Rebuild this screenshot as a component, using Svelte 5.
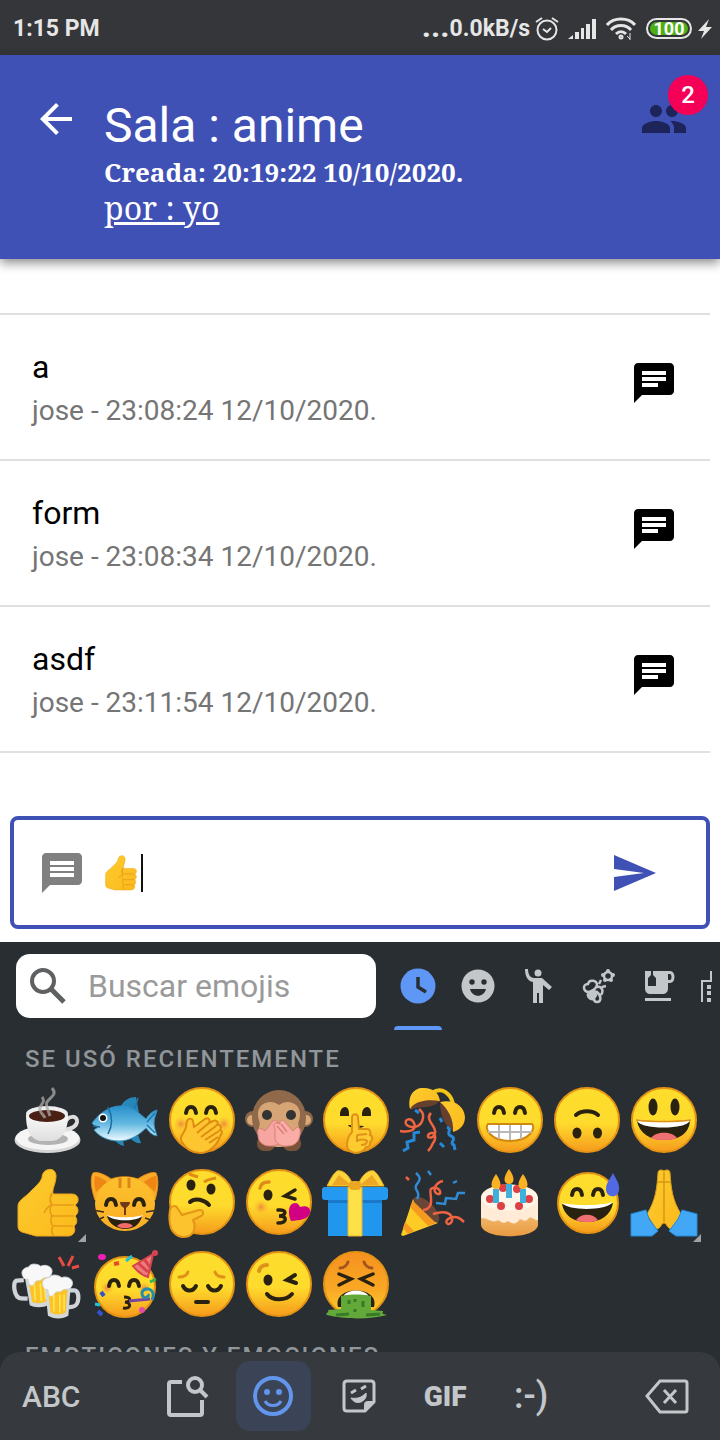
<script>
  const messages = [
    { text: 'a', meta: 'jose - 23:08:24 12/10/2020.' },
    { text: 'form', meta: 'jose - 23:08:34 12/10/2020.' },
    { text: 'asdf', meta: 'jose - 23:11:54 12/10/2020.' }
  ];
  const emojis = [
    'coffee', 'fish', 'giggle', 'monkey', 'shush', 'ball', 'grin', 'upside', 'smile',
    'thumb', 'cat', 'think', 'kiss', 'gift', 'popper', 'cake', 'sweat', 'pray',
    'beers', 'party', 'pensive', 'wink', 'vomit'
  ];
  const withVariants = ['thumb', 'pray'];
  const categories = ['Recientes', 'Emoticones', 'Personas', 'Naturaleza', 'Comida', 'Viajes'];
  let draft = $state('');
  let query = $state('');
</script>

{#snippet face(fill = 'url(#face)')}
  <circle cx="38" cy="38" r="32" {fill} stroke="#e59315" stroke-width="2" />
{/snippet}

{#snippet arcEyes(x1, x2, y)}
  <g fill="none" stroke="#2a2210" stroke-width="4" stroke-linecap="round">
    <path d="M{x1 - 5} {y + 3}c1-8 9-8 10 0" />
    <path d="M{x2 - 5} {y + 3}c1-8 9-8 10 0" />
  </g>
{/snippet}

{#snippet chatIcon(d)}
  <svg class="icon48" viewBox="0 0 24 24" fill="currentColor" aria-hidden="true"><path {d} /></svg>
{/snippet}

{#snippet thumbShape()}
  <path d="M37 6c5-2 9 1 9 6 0 8-4 12-3 18h19c7 0 8 8 3 11 4 3 4 8 0 11 3 4 2 8-1 10 2 5 0 9-5 10H26c-5-1-9-3-14-4-3-1-4-3-4-6V42c0-6 8-9 13-15 4-4 9-8 11-13 0-4 2-7 5-8z" fill="url(#hand)" stroke="#f0a51c" stroke-width="1" />
  <path d="M42 29c-3 4-2 8 0 12-5 1-6 5-8 8M42 41h22M42 52h22M43 62h20M42 31c-3 3-2 8 0 10-3 3-2 8 0 11-2 3-1 8 1 10-2 4-1 8 1 10" fill="none" stroke="#e79a18" stroke-width="1.6" />
{/snippet}

{#snippet mug(transform, handle)}
  <g {transform}>
    <path d={handle} fill="none" stroke="#d0d4d8" stroke-width="5" />
    <path d="M23 23h31l-3 38c-6 4-18 4-24 0z" fill="#d3d7da" />
    <path d="M27 27h23l-2 30c-5 3-14 3-18 0z" fill="#fbc326" />
    <path d="M34 36v20M41 36v21M46 36v19" stroke="#ffe352" stroke-width="2" />
    <path d="M22 28c-5-9 3-12 7-12 2-5 11-3 14 0 7-3 16 3 12 10-3 6-8 2-11 5-4 4-7-1-10 5-4 5-7 0-7-6-2 0-4 0-5-2z" fill="#f8f8f8" stroke="#cfd2d6" stroke-width="1" />
  </g>
{/snippet}

{#snippet emoji(name)}
  <svg class="emoji" viewBox="0 0 76 76" aria-hidden="true">
    {#if name === 'coffee'}
      <ellipse cx="37.500" cy="58" rx="33" ry="13" fill="#d5d5d5" />
      <ellipse cx="37.500" cy="56" rx="32" ry="12" fill="#f5f5f5" />
      <ellipse cx="38" cy="57" rx="20" ry="6" fill="#b3b3b3" />
      <path d="M55 41c3-8 13-8 12-1-1 6-8 7-13 8" fill="none" stroke="#dedede" stroke-width="4" />
      <path d="M16 33c0 15 4 24 14 26h13c10-2 15-11 15-26z" fill="url(#cup)" />
      <ellipse cx="37" cy="32" rx="21" ry="8" fill="#eee" />
      <ellipse cx="37" cy="34" rx="18" ry="6" fill="#4a2014" />
      <path d="M42 6c6 7-2 9-5 14-2 3 1 7 3 14M32 15c5 6-4 8-2 13 1 4 4 5 5 8" fill="none" stroke="#aaa9a7" stroke-opacity=".75" stroke-width="3" />
    {:else if name === 'fish'}
      <path d="M34 24c3-6 9-9 15-9l3 16zM27 57c2 3 5 6 10 7l-1-7zM44 57c3 3 7 5 10 4l-3-8z" fill="#2787b8" />
      <path d="M5 41c9-12 20-18 32-17 9 1 16 8 22 13 3-5 7-8 11-9-1 5-3 8-3 13s2 9 3 13c-5-1-8-4-11-8-7 7-16 13-27 13C19 59 11 53 7 48l4-3c-3-1-5-2-6-4z" fill="url(#fish)" stroke="#3490c2" stroke-width="1" />
      <path d="M6 44l7 1M21 25c4 8 5 18 0 27" fill="none" stroke="#1d6d9a" stroke-width="1.500" />
      <circle cx="16" cy="36" r="4.500" fill="#fff" /><circle cx="16" cy="36" r="3" fill="#151515" />
      <path d="M51 16l-3 10M68 31l-8 9M68 51l-8-8" stroke="#1d79ad" stroke-width="1.500" />
    {:else if name === 'giggle'}
      {@render face()}
      <circle cx="17" cy="42" r="8" fill="url(#blush)" /><circle cx="60" cy="42" r="8" fill="url(#blush)" />
      {@render arcEyes(27, 47, 28)}
      <path d="M18 60c-4-5 3-9 4-15 0-6 2-9 5-8 3 0 2 5 3 8l11-8c3-2 6 1 4 4l4-2c4-2 6 2 4 4 4-1 5 3 3 5 3 1 2 4 0 6-2 8-10 17-20 17-7 0-14-4-18-11z" fill="#fdc52f" stroke="#df8b14" stroke-width="2" />
      <path d="M33 51l12-10M37 55l15-11M41 58l14-9M45 61l9-6" stroke="#df8b14" stroke-width="2" />
    {:else if name === 'monkey'}
      <circle cx="12" cy="37" r="8" fill="#8d6748" /><circle cx="64" cy="37" r="8" fill="#8d6748" />
      <circle cx="11" cy="38" r="5" fill="#d8a979" /><circle cx="65" cy="38" r="5" fill="#d8a979" />
      <rect x="16" y="54" width="18" height="15" rx="7" fill="#7a5439" /><rect x="42" y="54" width="18" height="15" rx="7" fill="#7a5439" />
      <ellipse cx="38" cy="36" rx="27" ry="28" fill="#8f694a" />
      <path d="M38 23c-9-7-22-1-21 10 0 5 3 7 1 12-1 12 9 20 20 20s21-8 20-20c-2-5 1-7 1-12 1-11-12-17-21-10z" fill="#d5a576" />
      <circle cx="26" cy="33" r="5" fill="#333" /><circle cx="50" cy="33" r="5" fill="#333" />
      <path d="M36 42h3" stroke="#704b31" stroke-width="2" />
      <path d="M42 56c-1 6-7 8-13 8-8 0-12-5-12-11-1-6 1-8 4-6l3 2 8-10c2-2 5 0 4 3l3-2c3-1 4 2 3 5z" fill="#f7a5a0" stroke="#da8078" />
      <path d="M34 57c1 5 7 8 13 7 7 0 11-5 12-11 1-6-1-9-4-7l-3 3-9-10c-2-2-5 0-4 3l-3-1c-3 0-4 3-2 5z" fill="#faaca6" stroke="#da8078" />
      <path d="M36 44l7 8M40 42l6 8" stroke="#da8078" stroke-width="1.500" />
    {:else if name === 'shush'}
      {@render face()}
      <path d="M22 34v-3c1-8 9-8 9 0v3zM44 34v-3c1-8 9-8 9 0v3z" fill="#2a2210" />
      <path d="M30 43l16 1c-2 3-14 3-16-1z" fill="#2a2210" />
      <path d="M34 50V36c0-5 6-5 6 0l1 11h8c3 0 4 3 3 6 3 1 3 5 0 7 1 3-1 5-4 5-2 4-6 6-11 6-5-1-8-4-8-8 0-5 1-9 5-13z" fill="#fdca30" stroke="#df9218" stroke-width="2" />
      <path d="M39 53l10-1M39 59c3-2 8-2 10 0 0 4-4 4-6 4M39 53v7" fill="none" stroke="#df9218" stroke-width="2" />
    {:else if name === 'ball'}
      <path d="M37 11c10-7 19 1 21 11" fill="none" stroke="#f2c517" stroke-width="4" />
      <path d="M15 27C12 13 20 5 29 6c9 0 15 5 16 13z" fill="url(#hand)" />
      <path d="M15 27c5-8 17-10 30-8-8 8-17 5-30 8zM45 20c9 6 14 15 13 29-8-5-13-15-13-29z" fill="#65402f" />
      <path d="M45 20c13-3 24 3 25 15 0 8-5 13-12 15 1-13-5-23-13-30z" fill="url(#hand)" />
      <path d="M5 49c11 2 17-2 14-8s-10-4-8 1c2 4 15 6 17-6 1-6-2-7-4-9M36 31c-7 7 6 13 4 20s-10 5-6 1c6-4 8 4 4 9-2 5-5 8-5 8" fill="none" stroke="#ef6541" stroke-width="2.500" />
      <path d="M8 69l5-3-1-6 7-2v-7l6-1M52 45c6 3-2 6 4 9 7 3-3 7 3 9l1 5M45 36l2 4M20 28l4 3M45 61l4 4" fill="none" stroke="#2588d8" stroke-width="3" />
    {:else if name === 'grin'}
      {@render face()}{@render arcEyes(27, 48, 28)}
      <path d="M16 42h44c4 4-2 17-22 17S12 46 16 42z" fill="#fff" stroke="#cf8910" stroke-width="2" />
      <path d="M16 50h44M27 43v14M38 43v15M49 43v14" stroke="#b9b9b9" stroke-width="2" />
    {:else if name === 'upside'}
      {@render face()}
      <path d="M27 33c6-5 16-5 22 0" fill="none" stroke="#2a2210" stroke-width="4" stroke-linecap="round" />
      <ellipse cx="28" cy="51" rx="4.500" ry="5.500" fill="#2a2210" /><ellipse cx="48.500" cy="51" rx="4.500" ry="5.500" fill="#2a2210" />
    {:else if name === 'smile'}
      {@render face()}
      <ellipse cx="27" cy="25" rx="4.500" ry="8.500" fill="#2a2210" /><ellipse cx="49" cy="25" rx="4.500" ry="8.500" fill="#2a2210" />
      <path d="M11 39c14 4 38 4 53 0-1 13-12 19-26 19S13 51 11 39z" fill="#2a2210" />
      <path d="M11 38c14 3 38 3 53 0-1 10-52 10-53 0z" fill="#fff" />
      <path d="M25 56c5-7 21-7 26 0-6 3-20 3-26 0z" fill="#f06f72" />
      <path d="M10 38c15 2 39 2 55 0" stroke="#df9218" stroke-width="1.500" fill="none" />
    {:else if name === 'thumb'}
      {@render thumbShape()}
    {:else if name === 'cat'}
      <path d="M8 36C4 24 3 14 6 9c4-2 13 2 18 6 9-3 18-3 27 0 5-4 15-8 18-6 3 6 2 17-1 27z" fill="#f9ac27" stroke="#e88d18" />
      <path d="M9 28c-2-8-2-13-1-16 4 0 8 3 12 6zM68 28c2-8 2-13 1-16-4 0-8 3-12 6z" fill="#ee8615" />
      <ellipse cx="38" cy="40" rx="30" ry="27" fill="url(#cat)" />
      <path d="M33 14v10M42 14v10" stroke="#df8419" stroke-width="3" />
      {@render arcEyes(24, 52, 38)}
      <path d="M33 38h10c0 3-3 5-4 6v7h-2v-7c-2-1-4-3-4-6z" fill="#70391a" />
      <path d="M20 52c8 3 28 3 35 0-2 9-9 13-17 13S22 60 20 52z" fill="#2a2210" /><path d="M20 51c7 3 28 3 36 0-4 7-31 7-36 0z" fill="#fff" />
      <path d="M30 62c3-4 13-4 16 0-4 3-12 3-16 0z" fill="#f16c69" />
      <path d="M5 46l12 2M6 58l11-5M59 48l12-2M58 54l12 4" stroke="#372e22" stroke-width="1.500" />
    {:else if name === 'think'}
      {@render face()}
      <path d="M25 10l9 3M40 18c4-3 8-3 12-4" stroke="#df8b14" stroke-width="3" fill="none" />
      <ellipse cx="27" cy="21" rx="4.500" ry="5.500" fill="#2a2210" /><ellipse cx="47" cy="25" rx="4.500" ry="5.500" fill="#2a2210" />
      <path d="M26 38c5-5 15-2 19 3" fill="none" stroke="#2a2210" stroke-width="4" stroke-linecap="round" />
      <path d="M6 46c1-5 6-5 8-1l4 6 17-5c5-1 5 5 2 6l-8 4c3 5 2 13-4 16-8 3-15-1-18-8-2-6-2-12-1-18z" fill="#fdc32e" stroke="#e49618" stroke-width="2" />
    {:else if name === 'kiss'}
      {@render face()}
      <circle cx="20" cy="43" r="8" fill="url(#blush)" />
      <path d="M19 24c1-5 4-6 9-6" fill="none" stroke="#dd8c18" stroke-width="3.500" stroke-linecap="round" />
      <ellipse cx="27" cy="31" rx="4.500" ry="5.500" fill="#2a2210" />
      <path d="M54 26l-10 6 10 3M37 46c10-1 8 6 1 6 9 0 8 7-1 7" fill="none" stroke="#2a2210" stroke-width="3.500" stroke-linecap="round" />
      <path d="M50 57c-4-9-2-18 4-18 3 0 4 2 5 4 6-2 11 0 10 6-2 7-11 7-19 8z" fill="#d20082" />
    {:else if name === 'gift'}
      <path d="M9 22c3-6 6-12 10-15 6-2 14 6 16 15zM66 22c-3-6-6-12-10-15-6-2-14 6-16 15z" fill="#fdd43b" stroke="#e6ac24" />
      <path d="M14 21l7-10 12 10M61 21l-7-10-12 10" fill="#eda725" />
      <path d="M10 35h54v37H10z" fill="#2196ed" /><rect x="4" y="23" width="66" height="13" rx="3" fill="#2499f1" /><path d="M10 36h54v3H10z" fill="#1b78c8" />
      <path d="M30 23h14v49H30z" fill="#fee049" stroke="#e7b12d" /><rect x="31" y="17" width="12" height="9" rx="4" fill="#eba622" />
    {:else if name === 'popper'}
      <ellipse cx="31" cy="46" rx="8" ry="17" transform="rotate(-45 31 46)" fill="#694638" />
      <path d="M6 71l12-36c3 12 12 21 25 24L8 72z" fill="#fccb25" /><path d="M15 43l18 19 8-3-23-22zM10 58l9 9-6 3-5-6z" fill="#f49a1f" />
      <path d="M28 46c14-1 5-19 8-21 6-5 13 5 7 5-6-1-4-11 5-13M38 50c12-4 20-1 19 7-3 7-10 0-2-3 7-3 11 1 14 4M11 13l3 3" fill="none" stroke="#ef6340" stroke-width="2.500" />
      <path d="M22 35c5-8-5-9 0-15s2-8-1-11M41 39l9 1 1-6 10 1 2-6h7M33 7l3 4M58 19l4-2" fill="none" stroke="#318bd5" stroke-width="2.500" />
    {:else if name === 'cake'}
      <path d="M9 33v28c2 15 55 15 57 0V33z" fill="url(#cakeBase)" />
      <path d="M9 34c0-18 57-18 57 0v22c-4 1-5-4-9-2-4 5-6 2-9 1-4 6-8 5-12 2-5 4-8 0-10-1-6 4-9-2-17-2z" fill="#ffebd6" />
      <ellipse cx="37.500" cy="34" rx="28" ry="13" fill="#fff5e8" />
      <g fill="#dc4145"><circle cx="18" cy="35" r="4" /><circle cx="29" cy="42" r="4" /><circle cx="47" cy="42" r="4" /><circle cx="57" cy="35" r="4" /><circle cx="31" cy="24" r="4" /><circle cx="45" cy="25" r="4" /></g>
      <path d="M21 25h6v14h-6zM34 20h6v14h-6zM48 25h6v14h-6z" fill="#3db1db" />
      <path d="M24 10c-6 8-6 15 0 15s6-7 0-15zM37 5c-6 8-6 15 0 15s6-7 0-15zM51 10c-6 8-6 15 0 15s6-7 0-15z" fill="#fab224" />
    {:else if name === 'sweat'}
      <circle cx="39" cy="39" r="30" fill="url(#face)" stroke="#e59315" stroke-width="2" />
      {@render arcEyes(28, 49, 28)}
      <path d="M13 40c14 3 37 3 51-1-2 12-12 19-26 19S15 51 13 40z" fill="#2a2210" /><path d="M13 39c14 3 37 3 51-1-6 9-45 9-51 1z" fill="#fff" />
      <path d="M27 56c5-7 17-7 22 0-6 3-16 3-22 0z" fill="#f06f72" />
      <path d="M64 9c3 6 7 11 6 17-1 9-13 8-13-1 0-6 4-10 7-16z" fill="#5169e3" />
    {:else if name === 'pray'}
      <path d="M38 7c-3-2-6-1-6 2-1 14-2 27-11 41l9 15c5 0 5-6 8-6s3 6 8 6l9-15C46 36 45 23 44 9c0-3-3-4-6-2z" fill="url(#hand)" stroke="#dfa016" /><path d="M38 8v50M32 18h12" stroke="#d9970f" stroke-width="1.500" />
      <path d="M5 50l15-4 3 9 9 12-6 5H5zM71 50l-15-4-4 9-9 12 7 5h21z" fill="#42a7f4" stroke="#258bdc" />
    {:else if name === 'beers'}
      {@render mug('translate(-4 7) rotate(-4 30 40) scale(.85)', 'M22 31h-8c-6 0-5 20 3 21l8 1')}
      {@render mug('translate(15 18) scale(.85)', 'M52 31h6c7 0 6 18-1 19l-6 1')}
      <path d="M54 20l-5-9M58 20l5-10M62 22l7-2" stroke="#e84b43" stroke-width="3" />
    {:else if name === 'party'}
      <circle cx="38" cy="41" r="30" fill="url(#face)" stroke="#e59315" stroke-width="2" />
      <circle cx="20" cy="42" r="7" fill="url(#blush)" /><circle cx="57" cy="42" r="7" fill="url(#blush)" />
      {@render arcEyes(27, 47, 37)}
      <path d="M37 51c8 0 7 5 1 5 7 1 6 7-2 6" fill="none" stroke="#2a2210" stroke-width="3" />
      <path d="M42 55l21-2" stroke="#79449f" stroke-width="3" /><path d="M65 54c6-13-11-14-10-6 1 6 8 3 6 0" fill="none" stroke="#248cac" stroke-width="3" />
      <path d="M46 20L66 8l-5 23c-7-2-11-6-15-11z" fill="#ef7b7c" stroke="#d6434d" stroke-width="2" /><path d="M51 17l10 9M57 13l6 8" stroke="#d6434d" stroke-width="3" /><circle cx="68" cy="7" r="3" fill="#d6434d" />
      <ellipse cx="15" cy="11" rx="4" ry="3" fill="#ef20b5" /><circle cx="55" cy="64" r="3" fill="#e34bab" />
      <path d="M39 15l6-5M8 58l5 1" stroke="#20c4d9" stroke-width="3" /><path d="M27 18l5-1" stroke="#e8492d" stroke-width="4" /><path d="M14 46l3 4M11 65l4 4" stroke="#3552cc" stroke-width="4" /><path d="M63 36l6-3" stroke="#37b44a" stroke-width="3" />
    {:else if name === 'pensive'}
      {@render face()}
      <path d="M15 31c5 0 8-2 9-5M60 31c-5 0-8-2-9-5" fill="none" stroke="#df9218" stroke-width="3" stroke-linecap="round" />
      <path d="M19 40c3 6 10 6 13 0M44 40c3 6 10 6 13 0M32 56h12" fill="none" stroke="#2a2210" stroke-width="4" stroke-linecap="round" />
    {:else if name === 'wink'}
      {@render face()}
      <path d="M18 25c1-4 4-6 8-6" fill="none" stroke="#df9218" stroke-width="4" stroke-linecap="round" /><ellipse cx="27" cy="34" rx="4.500" ry="5.500" fill="#2a2210" />
      <path d="M54 29l-8 5 9 3M26 48c5 7 19 7 25 0" fill="none" stroke="#2a2210" stroke-width="4" stroke-linecap="round" />
    {:else if name === 'vomit'}
      {@render face('url(#sick)')}
      <path d="M22 22c4 0 7-3 8-6M54 22c-4 0-7-3-8-6" fill="none" stroke="#a4541c" stroke-width="3" stroke-linecap="round" />
      <path d="M21 28l12 5-12 6M55 28l-12 5 12 6" fill="none" stroke="#2a2210" stroke-width="3.500" stroke-linecap="round" />
      <path d="M20 61c-6-22 42-22 36 0z" fill="#2a2210" /><path d="M26 49c5-6 19-6 24 0v4H26z" fill="#fff" />
      <path d="M23 50c8-2 22-2 30 0v14l12 1c1 2-4 2 4 4-18 5-44 4-60 0-3-1 3-3 1-5l13-1z" fill="#63a93a" /><path d="M31 54v4M37 53v3M45 55v6M37 63v3M18 69l13-1M48 69l14-1" stroke="#377b27" stroke-width="3" />
    {/if}
  </svg>
{/snippet}

<svg class="defs" aria-hidden="true">
  <defs>
    <linearGradient id="face" x1="0" y1="0" x2="0" y2="1"><stop offset="0" stop-color="#fddd2d" /><stop offset=".55" stop-color="#fedb2c" /><stop offset="1" stop-color="#f69b1d" /></linearGradient>
    <linearGradient id="sick" x1="0" y1="0" x2="0" y2="1"><stop offset="0" stop-color="#f59120" /><stop offset=".6" stop-color="#f9a925" /><stop offset="1" stop-color="#fcd12d" /></linearGradient>
    <linearGradient id="cat" x1="0" y1="0" x2="0" y2="1"><stop offset="0" stop-color="#fcc12d" /><stop offset="1" stop-color="#faae25" /></linearGradient>
    <linearGradient id="hand" x1="0" y1="0" x2="1" y2="1"><stop offset="0" stop-color="#fdcc30" /><stop offset="1" stop-color="#fbb91b" /></linearGradient>
    <linearGradient id="fish" x1="0" y1="0" x2="0" y2="1"><stop offset="0" stop-color="#278fcb" /><stop offset=".5" stop-color="#62b8e1" /><stop offset="1" stop-color="#f1fcff" /></linearGradient>
    <linearGradient id="cup" x1="0" y1="0" x2="0" y2="1"><stop offset="0" stop-color="#fafafa" /><stop offset="1" stop-color="#dedede" /></linearGradient>
    <linearGradient id="cakeBase" x1="0" y1="0" x2="0" y2="1"><stop offset="0" stop-color="#fbd18c" /><stop offset="1" stop-color="#e89a42" /></linearGradient>
    <radialGradient id="blush"><stop offset="0" stop-color="#f18a3d" /><stop offset="1" stop-color="#fac32c" stop-opacity="0" /></radialGradient>
  </defs>
</svg>

<div class="page">
  <div class="status">
    <span class="time">1:15 PM</span>
    <span class="dots">...</span><span>0.0kB/s</span>
    <svg class="alarm" viewBox="0 0 24 26" fill="none" stroke="#e6e6e6" stroke-width="2" aria-hidden="true"><circle cx="12" cy="14" r="9.500" /><path d="M8 13l4 3 4-4M1 6l6-4M23 6l-6-4" /></svg>
    <svg class="signal" viewBox="0 0 28 20" fill="#e6e6e6" aria-hidden="true"><path d="M0 20l5-4v4zM7 13h4v7H7zM13 9h3v11h-3zM18 5h4v15h-4zM24 0h4v20h-4z" /></svg>
    <svg class="wifi" viewBox="0 0 30 23" fill="none" stroke="#e6e6e6" stroke-width="3" aria-hidden="true"><path d="M1 8c7-8 21-8 28 0M5 13c5-6 15-6 20 0M10 17c3-3 7-3 10 0" /><circle cx="15" cy="20" r="1" /><path d="M24 16v7M24 22l-3-3" stroke-width="1" /></svg>
    <span class="battery"><span>100</span></span>
    <svg class="bolt" viewBox="0 0 14 20" fill="#e6e6e6" aria-hidden="true"><path d="M11 0L0 12h6L3 20 14 8H8z" /></svg>
  </div>

  <header>
    <button class="back" aria-label="Volver"><svg class="icon48" viewBox="0 0 24 24" fill="#fff"><path d="M20 11H7.830l5.590-5.590L12 4l-8 8 8 8 1.410-1.410L7.830 13H20v-2z" /></svg></button>
    <div class="room">
      <h1>Sala : anime</h1>
      <strong>Creada: 20:19:22 10/10/2020.</strong>
      <span class="owner">por : yo</span>
    </div>
    <button class="people" aria-label="Participantes">
      <svg class="icon48" viewBox="0 0 24 24" fill="#1c2459"><path d="M16 11c1.660 0 2.990-1.340 2.990-3S17.660 5 16 5c-1.660 0-3 1.340-3 3s1.340 3 3 3zm-8 0c1.660 0 2.990-1.340 2.990-3S9.660 5 8 5C6.340 5 5 6.340 5 8s1.340 3 3 3zm0 2c-2.330 0-7 1.170-7 3.500V19h14v-2.500c0-2.330-4.670-3.500-7-3.500zm8 0c-.290 0-.620.020-.970.050 1.160.840 1.970 1.970 1.970 3.450V19h6v-2.500c0-2.330-4.670-3.500-7-3.500z" /></svg>
      <span class="badge">2</span>
    </button>
  </header>

  <main>
    <ul class="messages">
      {#each messages as m}
        <li>
          <div><p class="text">{m.text}</p><p class="meta">{m.meta}</p></div>
          {@render chatIcon('M20 2H4c-1.100 0-1.990.900-1.990 2L2 22l4-4h14c1.100 0 2-.900 2-2V4c0-1.100-.900-2-2-2zM6 9h12v2H6V9zm8 5H6v-2h8v2zm4-6H6V6h12v2z')}
        </li>
      {/each}
    </ul>
    <form class="compose" onsubmit={(e) => e.preventDefault()}>
      <span class="grey">{@render chatIcon('M20 2H4c-1.100 0-1.990.900-1.990 2L2 22l4-4h14c1.100 0 2-.900 2-2V4c0-1.100-.900-2-2-2zm-2 12H6v-2h12v2zm0-3H6V9h12v2zm0-3H6V6h12v2z')}</span>
      <svg class="typed" viewBox="3 2 70 74" aria-hidden="true">{@render thumbShape()}</svg>
      <span class="caret"></span>
      <input type="text" aria-label="Mensaje" bind:value={draft} />
      <button class="send" aria-label="Enviar"><svg class="icon48" viewBox="0 0 24 24" fill="#3f51b5"><path d="M2.010 21L23 12 2.010 3 2 10l15 2-15 2z" /></svg></button>
    </form>
  </main>

  <section class="keyboard">
    <div class="tools">
      <label class="search">
        <svg viewBox="0 0 36 36" fill="none" stroke="#5f6062" stroke-width="4" aria-hidden="true"><circle cx="13" cy="13" r="11" /><path d="M21 21l13 13" stroke-width="5" /></svg>
        <input type="text" placeholder="Buscar emojis" aria-label="Buscar emojis" bind:value={query} />
      </label>
      <div class="tabs">
        {#each categories as c, i}
          <button class:active={i === 0} aria-label={c}>
            <svg viewBox="0 0 36 36" fill="#c3c7ca" aria-hidden="true">
              {#if i === 0}
                <circle cx="18" cy="18" r="17.500" fill="#5f97f6" /><path d="M18 9v10l8 5" fill="none" stroke="#292e32" stroke-width="3.500" />
              {:else if i === 1}
                <circle cx="18" cy="18" r="16.500" /><circle cx="12" cy="14" r="2.700" fill="#292e32" /><circle cx="24" cy="14" r="2.700" fill="#292e32" /><path d="M10 21h16c-2 9-14 9-16 0z" fill="#292e32" />
              {:else if i === 2}
                <circle cx="18" cy="5" r="3.500" /><path d="M5 1h3c0 5 2 9 6 9h8l10 9-3 3-6-5v18h-4V25h-2v10h-4V14C7 13 5 7 5 1z" />
              {:else if i === 3}
                <g fill="none" stroke="#c3c7ca" stroke-width="2.500">
                  <path d="M9 24c-6 0-7-8-1-8 1-5 9-4 9 1-1 4-5 6-8 7zM17 19c5-1 7 4 4 8M17 24c4 3 5 10 0 10-4 0-4-6 0-10zM9 24c-3 4 1 8 5 7M19 16l2-4M22 19l4-1" />
                  <circle cx="28" cy="8" r="4" />
                </g>
                <circle cx="13" cy="26" r="4.500" />
                <g><circle cx="28" cy="3" r="2" /><circle cx="33" cy="7" r="2" /><circle cx="31" cy="12" r="2" /><circle cx="25" cy="12" r="2" /><circle cx="23" cy="7" r="2" /></g>
              {:else if i === 4}
                <path fill-rule="evenodd" d="M5 3h25c6 0 6 12 0 12h-2v5c0 4-2 6-6 6H11c-4 0-6-2-6-6zm23 3v6h2c2 0 2-6 0-6zM11 3v4l-3 3v8h8v-8l-3-3V3z" /><path d="M5 30h26v3H5z" />
              {:else}
                <path d="M1 34V13h9V4h14v30" fill="none" stroke="#c3c7ca" stroke-width="2" /><path d="M6 17h4v4H6zM6 23h4v4H6zM6 30h4v4H6z" />
              {/if}
            </svg>
          </button>
        {/each}
      </div>
    </div>
    <div class="panel">
      <h2>SE USÓ RECIENTEMENTE</h2>
      <div class="grid">
        {#each emojis as name}
          <button class="cell" class:variants={withVariants.includes(name)} aria-label={name}>{@render emoji(name)}</button>
        {/each}
      </div>
      <h2>EMOTICONES Y EMOCIONES</h2>
    </div>
    <nav>
      <button class="abc">ABC</button>
      <button aria-label="Buscar"><svg viewBox="0 0 44 44" fill="none" stroke="#c3c7ca" stroke-width="4"><path d="M17 8H6q-2 0-2 2v29q0 2 2 2h29q2 0 2-2V26" /><circle cx="30" cy="11" r="7" /><path d="M35 16l7 7" /></svg></button>
      <button class="on" aria-label="Emojis"><svg viewBox="0 0 44 44" fill="none" stroke="#6295ec" stroke-width="4"><circle cx="22" cy="22" r="18" /><path d="M14 27c3 6 13 6 16 0" stroke-width="3" /><g fill="#6295ec" stroke="none"><circle cx="16" cy="18" r="3" /><circle cx="28" cy="18" r="3" /></g></svg></button>
      <button aria-label="Stickers"><svg viewBox="0 0 44 44" fill="none" stroke="#c3c7ca" stroke-width="3"><path d="M10 7h24q3 0 3 3v18l-9 9H10q-3 0-3-3V10q0-3 3-3z" /><path d="M37 27h-6q-4 0-4 4v6l10-9z" fill="#c3c7ca" stroke="none" /><path d="M14 24c6 1 10 0 15-5 2 8-10 14-15 5z" fill="#c3c7ca" stroke-width="1" /><path d="M14 19l5-3M24 15l5-3" stroke-width="3" /></svg></button>
      <button class="gif">GIF</button>
      <button class="text-face">:-)</button>
      <button class="delete" aria-label="Borrar"><svg viewBox="0 0 44 44" fill="none" stroke="#c3c7ca" stroke-width="3"><path d="M15 7h25q2 0 2 2v27q0 2-2 2H15L2 22z" /><path d="M19 16l12 13M31 16L19 29" /></svg></button>
    </nav>
  </section>
</div>

<style>
  :global(body) { margin: 0; }
  .page { min-height: 100vh; display: flex; flex-direction: column; font-family: Roboto, sans-serif; background: #fff; color: #000; overflow: hidden; }
  button { border: 0; padding: 0; margin: 0; background: none; font: inherit; color: inherit; display: flex; align-items: center; justify-content: center; }
  input { border: 0; outline: 0; background: none; font: inherit; width: 0; min-width: 0; padding: 0; }
  svg { display: block; flex: none; }
  h1, h2, p, ul { margin: 0; padding: 0; font-weight: 400; }
  .defs { position: absolute; width: 0; height: 0; }
  .icon48 { width: 48px; height: 48px; }

  .status { height: 55px; background: #353639; color: #e6e6e6; display: flex; align-items: center; padding: 2px 8px 0 13px; font-size: 23px; font-weight: 700; box-sizing: border-box; }
  .time { margin-right: auto; }
  .dots { font-size: 32px; line-height: 32px; padding-bottom: 6px; }
  .alarm { width: 24px; height: 26px; margin-left: 5px; }
  .signal { width: 28px; height: 20px; margin-left: 9px; }
  .wifi { width: 30px; height: 23px; margin-left: 10px; }
  .battery { display: flex; margin-left: 10px; border: 2px solid #e6e6e6; border-radius: 12px; padding: 2px; }
  .battery span { width: 38px; height: 13px; line-height: 13px; border-radius: 7px; background: #4caf16; color: #fff; font-size: 18px; text-align: center; }
  .bolt { width: 14px; height: 20px; margin-left: 6px; }

  header { background: #3f51b5; color: #fff; display: flex; align-items: flex-start; padding: 40px 32px 33px; box-shadow: 0 4px 10px rgba(0, 0, 0, 0.45); z-index: 1; }
  .room { display: flex; flex-direction: column; align-items: flex-start; flex: 1; padding: 3px 0 0 24px; font-family: "Noto Serif", "Liberation Serif", serif; }
  .room h1 { font-family: Roboto, sans-serif; font-size: 48px; line-height: 56px; }
  .room strong { font-size: 26px; line-height: 36px; }
  .owner { font-size: 32px; line-height: 36px; text-decoration: underline; }
  .people { position: relative; }
  .badge { position: absolute; top: -20px; right: -20px; width: 40px; height: 40px; border-radius: 50%; background: #f50057; font-size: 24px; line-height: 40px; font-weight: 500; }

  main { flex: 1; display: flex; flex-direction: column; padding: 54px 10px 13px 0; }
  .messages { list-style: none; border-top: 2px solid #e0e0e0; }
  li { display: flex; align-items: center; justify-content: space-between; height: 144px; border-bottom: 2px solid #e0e0e0; padding: 0 32px; }
  li .icon48 { margin-top: -8px; }
  .text { font-size: 32px; line-height: 48px; }
  .meta { font-size: 28px; line-height: 40px; color: #757575; }
  .compose { margin: auto 0 0 10px; height: 113px; box-sizing: border-box; border: 4px solid #3f51b5; border-radius: 8px; display: flex; align-items: center; padding: 0 48px 0 24px; }
  .grey { color: #808080; }
  .typed { width: 36px; height: 38px; margin-left: 17px; }
  .caret { width: 2px; height: 38px; background: #111; margin-left: 2px; }
  .compose input { flex: 1; font-size: 32px; caret-color: transparent; }

  .keyboard { background: #292e32; color: #c3c7ca; }
  .tools { display: flex; gap: 12px; padding: 12px 8px 0 16px; height: 88px; box-sizing: border-box; }
  .search { flex: 0 0 calc(50% + 12px); min-width: 0; height: 64px; box-sizing: border-box; padding: 0 14px; border-radius: 14px; background: #fff; display: flex; align-items: center; gap: 22px; }
  .search svg { width: 36px; height: 36px; }
  .search input { flex: 1; font-size: 32px; color: #333; }
  .search input::placeholder { color: #9a9a9a; opacity: 1; }
  .tabs { flex: 1; min-width: 0; display: flex; overflow: hidden; }
  .tabs button { flex: 0 0 60px; height: 76px; position: relative; padding-bottom: 12px; box-sizing: border-box; }
  .tabs svg { width: 36px; height: 36px; }
  .tabs button:last-child { justify-content: flex-start; padding-left: 13px; }
  .tabs .active::after { content: ""; position: absolute; left: 6px; right: 6px; bottom: 0; height: 4px; border-radius: 4px 4px 0 0; background: #5f97f6; }
  .panel { height: 322px; overflow: hidden; }
  h2 { font-size: 24px; line-height: 28px; font-weight: 500; letter-spacing: 2px; color: #90969a; padding: 15px 25px 9px; }
  .grid { display: grid; grid-template-columns: repeat(9, 1fr); padding: 0 18px 0 10px; }
  .grid + h2 { padding-top: 14px; }
  .cell { height: 82px; align-items: flex-start; position: relative; }
  .emoji { width: 76px; height: 76px; }
  .variants::after { content: ""; position: absolute; right: 1px; bottom: 4px; border-left: 8px solid transparent; border-bottom: 8px solid #a0a3a6; }
  nav { height: 88px; border-radius: 20px 20px 0 0; background: #363a3f; display: flex; align-items: center; padding: 0 31px 0 22px; box-sizing: border-box; }
  nav button { width: 75px; height: 70px; border-radius: 14px; margin-right: 11px; }
  nav svg { width: 44px; height: 44px; }
  nav .on { background: #3b4456; }
  nav .abc { width: auto; margin-right: auto; padding-right: 4px; font-size: 30px; font-weight: 500; }
  nav .gif { font-size: 28px; font-weight: 900; }
  nav .text-face { font-size: 36px; font-weight: 500; }
  nav .delete { width: 44px; margin: 0 0 0 auto; }
</style>
